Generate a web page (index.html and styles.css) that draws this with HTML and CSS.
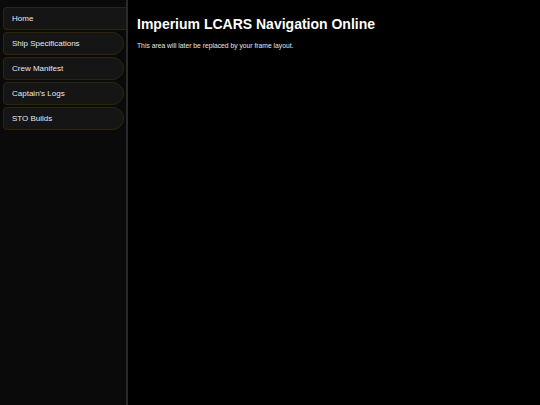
FILE: index.html
```html
<!DOCTYPE html>
<html>
<head>
<meta charset="utf-8">
<link rel="stylesheet" href="styles.css">
</head>
<body>
<div class="frame">
  <nav class="sidebar">
    <a class="nav-btn active">Home</a>
    <a class="nav-btn">Ship Specifications</a>
    <a class="nav-btn">Crew Manifest</a>
    <a class="nav-btn">Captain's Logs</a>
    <a class="nav-btn">STO Builds</a>
  </nav>
  <main class="content">
    <h1 class="title">Imperium LCARS Navigation Online</h1>
    <p class="note">This area will later be replaced by your frame layout.</p>
  </main>
</div>
</body>
</html>
```
FILE: styles.css
```css
html, body {
  margin: 0;
  padding: 0;
  background: #000;
  height: 100%;
}
body {
  font-family: "Liberation Sans", Arial, sans-serif;
  color: #e6e6e6;
}
.frame {
  display: flex;
  height: 405px;
}
.sidebar {
  width: 126px;
  flex: none;
  background: #0a0a0a;
  border-right: 2px solid #2a2a2a;
  display: flex;
  flex-direction: column;
  align-items: flex-start;
  gap: 2px;
  padding-top: 7px;
}
.nav-btn {
  display: flex;
  align-items: center;
  height: 21px;
  margin-left: 3px;
  width: 111px;
  padding-left: 8px;
  background: #151515;
  border: 1px solid #2c270c;
  border-radius: 4px 12px 12px 4px;
  font-size: 8px;
  color: #e8e8e8;
  text-decoration: none;
}
.nav-btn.active {
  width: 114px;
  border-right: none;
  border-radius: 4px 0 0 4px;
}
.content {
  flex: 1;
  padding-left: 9px;
}
.title {
  margin: 16px 0 0 0;
  font-size: 14px;
  font-weight: bold;
  color: #fff;
  line-height: 17px;
}
.note {
  margin: 9px 0 0 0;
  font-size: 6.75px;
  line-height: 8px;
  color: #e6e6e6;
}
```
